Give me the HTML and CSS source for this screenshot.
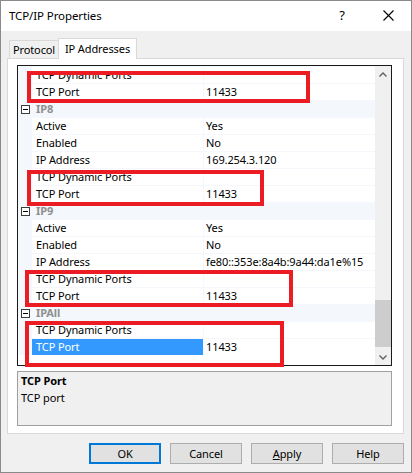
FILE: index.html
```html
<!DOCTYPE html>
<html>
<head>
<meta charset="utf-8">
<link rel="stylesheet" href="styles.css">
</head>
<body>
<div class="window">
  <div class="titlebar">
    <span class="title">TCP/IP Properties</span>
    <span class="capbtn help">?</span>
    <span class="capbtn close"><svg width="11" height="11" viewBox="0 0 11 11"><path d="M0.5 0.5 L10.5 10.5 M10.5 0.5 L0.5 10.5" stroke="#000" stroke-width="1.1" fill="none"/></svg></span>
  </div>
  <div class="tabs">
    <div class="tab">Protocol</div>
    <div class="tab active">IP Addresses</div>
  </div>
  <div class="panel">
    <div class="grid">
      <div class="rows">
        <div class="row"><div class="m"></div><div class="k">TCP Dynamic Ports</div><div class="v"></div></div>
        <div class="row"><div class="m"></div><div class="k">TCP Port</div><div class="v">11433</div></div>
        <div class="cat"><div class="m"><span class="box"></span></div><div class="name">IP8</div></div>
        <div class="row"><div class="m"></div><div class="k">Active</div><div class="v">Yes</div></div>
        <div class="row"><div class="m"></div><div class="k">Enabled</div><div class="v">No</div></div>
        <div class="row"><div class="m"></div><div class="k">IP Address</div><div class="v">169.254.3.120</div></div>
        <div class="row"><div class="m"></div><div class="k">TCP Dynamic Ports</div><div class="v"></div></div>
        <div class="row"><div class="m"></div><div class="k">TCP Port</div><div class="v">11433</div></div>
        <div class="cat"><div class="m"><span class="box"></span></div><div class="name">IP9</div></div>
        <div class="row"><div class="m"></div><div class="k">Active</div><div class="v">Yes</div></div>
        <div class="row"><div class="m"></div><div class="k">Enabled</div><div class="v">No</div></div>
        <div class="row"><div class="m"></div><div class="k">IP Address</div><div class="v">fe80::353e:8a4b:9a44:da1e%15</div></div>
        <div class="row"><div class="m"></div><div class="k">TCP Dynamic Ports</div><div class="v"></div></div>
        <div class="row"><div class="m"></div><div class="k">TCP Port</div><div class="v">11433</div></div>
        <div class="cat"><div class="m"><span class="box"></span></div><div class="name">IPAll</div></div>
        <div class="row"><div class="m"></div><div class="k">TCP Dynamic Ports</div><div class="v"></div></div>
        <div class="row sel"><div class="m"></div><div class="k">TCP Port</div><div class="v">11433</div></div>
        <div class="filler"></div>
      </div>
      <div class="scrollbar">
        <div class="arrow"><svg width="16" height="17" viewBox="0 0 16 17"><polyline points="4.5,10.5 8,7 11.5,10.5" fill="none" stroke="#606060" stroke-width="1.4"/></svg></div>
        <div class="track"><div class="thumb"></div></div>
        <div class="arrow"><svg width="16" height="17" viewBox="0 0 16 17"><polyline points="4.5,7.5 8,11 11.5,7.5" fill="none" stroke="#606060" stroke-width="1.4"/></svg></div>
      </div>
    </div>
    <div class="desc">
      <div class="desc-title">TCP Port</div>
      <div>TCP port</div>
    </div>
  </div>
  <div class="buttons">
    <div class="btn default">OK</div>
    <div class="btn">Cancel</div>
    <div class="btn"><span><u>A</u>pply</span></div>
    <div class="btn">Help</div>
  </div>
  <div class="mark m1"></div>
  <div class="mark m2"></div>
  <div class="mark m3"></div>
  <div class="mark m4"></div>
</div>
</body>
</html>
```

FILE: styles.css
```css
* { box-sizing: border-box; }
html, body { margin: 0; padding: 0; background: #fff; }
body {
  font-family: "Noto Sans", "Open Sans", sans-serif;
  font-size: 11px;
  letter-spacing: -0.1px;
  color: #000;
}
.window {
  position: relative;
  width: 412px;
  height: 473px;
  border: 1px solid #8a8a8a;
  background: #f0f0f0;
  display: flex;
  flex-direction: column;
  overflow: hidden;
}
.titlebar {
  height: 30px;
  background: #fff;
  display: flex;
  align-items: center;
  padding-left: 8px;
  padding-bottom: 2px;
  flex: none;
  font-size: 11.5px;
}
.title { flex: 1; }
.capbtn {
  width: 46px;
  height: 28px;
  display: flex;
  align-items: center;
  justify-content: center;
}
.help { font-size: 13px; }
.close svg { display: block; }
.tabs {
  height: 27px;
  display: flex;
  align-items: flex-end;
  padding-left: 8px;
  flex: none;
  position: relative;
  z-index: 2;
}
.tab {
  height: 18px;
  width: 50px;
  border: 1px solid #d9d9d9;
  border-bottom: none;
  background: #f0f0f0;
  display: flex;
  align-items: center;
  justify-content: center;
  white-space: nowrap;
}
.tab.active {
  width: 79px;
  height: 21px;
  margin-left: -1px;
  margin-bottom: -1px;
  background: #fff;
  padding-bottom: 2px;
}
.panel {
  margin-left: 6px;
  width: 397px;
  height: 376px;
  border: 1px solid #d9d9d9;
  background: #fff;
  padding: 6px 0 0 9px;
  flex: none;
}
.grid {
  width: 375px;
  height: 301px;
  border: 1px solid #1a1a1a;
  display: flex;
}
.rows {
  width: 357px;
  background: #f4f7fc;
  overflow: hidden;
  display: flex;
  flex-direction: column;
}
.row {
  height: 17px;
  padding-top: 1px;
  display: flex;
  flex: none;
}
.row .m { width: 14px; flex: none; }
.row .k {
  width: 171px;
  flex: none;
  background: #fff;
  padding-left: 4px;
  line-height: 16px;
  white-space: nowrap;
  overflow: hidden;
}
.row .v {
  flex: 1;
  margin-left: 1px;
  background: #fff;
  padding-left: 2px;
  line-height: 16px;
  white-space: nowrap;
  overflow: hidden;
}
.row.sel .k { background: #3399ff; color: #fff; }
.cat {
  height: 17px;
  padding-top: 1px;
  display: flex;
  align-items: center;
  flex: none;
}
.cat .m {
  width: 14px;
  flex: none;
  display: flex;
  padding-left: 3px;
}
.box {
  position: relative;
  width: 9px;
  height: 9px;
  border: 1px solid #3c3c3c;
  background: #fff;
}
.box::after {
  content: "";
  position: absolute;
  left: 1px;
  top: 3px;
  width: 5px;
  height: 1px;
  background: #000;
}
.cat .name {
  padding-left: 4px;
  font-weight: bold;
  color: #8f8f8f;
  line-height: 16px;
}
.filler { flex: 1; background: #fff; }
.scrollbar {
  width: 16px;
  background: #f0f0f0;
  display: flex;
  flex-direction: column;
}
.arrow { height: 17px; flex: none; }
.arrow svg { display: block; }
.track {
  flex: 1;
  display: flex;
  flex-direction: column;
  justify-content: flex-end;
  padding-bottom: 1px;
}
.thumb { height: 47px; background: #cdcdcd; }
.desc {
  margin-top: 5px;
  width: 375px;
  height: 55px;
  border: 1px solid #a0a0a0;
  background: #f0f0f0;
  padding-left: 3px;
  line-height: 17px;
}
.desc-title { font-weight: bold; }
.buttons {
  display: flex;
  justify-content: flex-end;
  gap: 9px;
  margin-top: 9px;
  padding-right: 7px;
  flex: none;
}
.btn {
  width: 72px;
  height: 21px;
  border: 1px solid #adadad;
  background: #e1e1e1;
  display: flex;
  align-items: center;
  justify-content: center;
}
.btn.default { border: 2px solid #0078d7; }
.mark {
  position: absolute;
  border: 4px solid #ec1c24;
  z-index: 5;
}
.m1 { left: 26px; top: 70px; width: 283px; height: 32px; }
.m2 { left: 26px; top: 169px; width: 237px; height: 36px; }
.m3 { left: 24px; top: 269px; width: 268px; height: 37px; }
.m4 { left: 24px; top: 320px; width: 259px; height: 46px; }
```
